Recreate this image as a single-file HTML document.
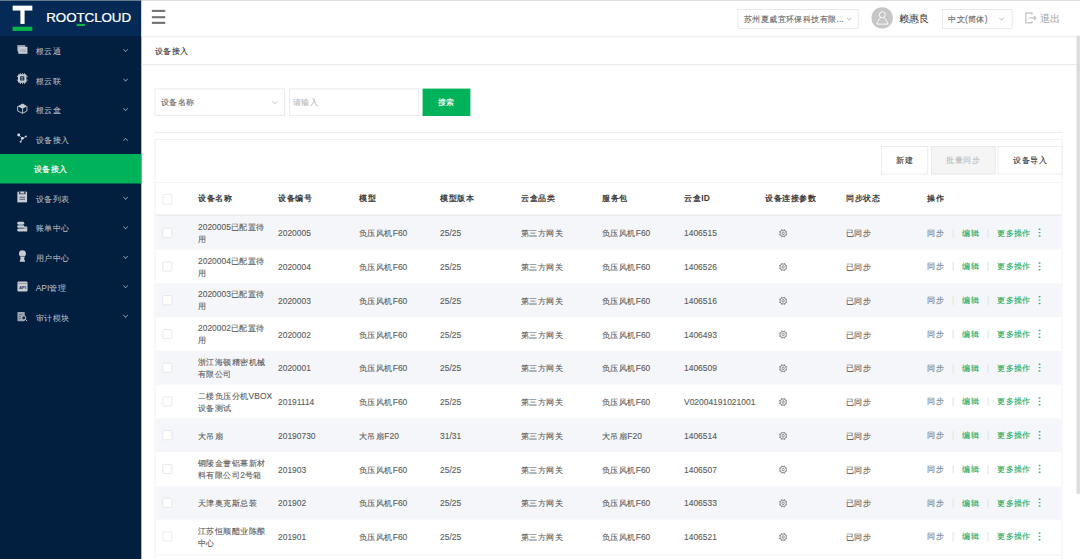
<!DOCTYPE html>
<html><head><meta charset="utf-8">
<style>
*{box-sizing:border-box;margin:0;padding:0}
html,body{width:1080px;height:559px;overflow:hidden;background:#fff}
#pg{-webkit-text-stroke-width:0.15px;position:absolute;left:0;top:0;width:1536px;height:795px;transform:scale(0.703125);transform-origin:0 0;font-family:"Liberation Sans",sans-serif;color:#555;background:#fff;overflow:hidden}
.a{position:absolute}
.mi{position:absolute;left:0;width:200.6px;height:42.1px;font-size:12px;color:#b3bac4;line-height:42.1px;-webkit-text-stroke-width:0.1px}
.mi .t{position:absolute;left:50.8px;top:1px}
.mi svg{position:absolute;left:22.6px;top:10px;width:18px;height:18px}
.mi .ch{position:absolute;left:175.5px;top:16.8px;width:5.2px;height:5.2px;border-right:1.3px solid #95a2b4;border-bottom:1.3px solid #95a2b4;transform:rotate(45deg)}
.mi .ch.up{transform:rotate(-135deg);top:19.5px}
.mi.act{background:#00b259;color:#fff;-webkit-text-stroke-width:0.3px}
.mi.act .t{left:48.4px}
.inp{position:absolute;border:1px solid #e2e2e2;background:#fff;font-size:12px;line-height:37px}
.btn{position:absolute;border:1px solid #e4e4e4;background:#fff;font-size:12px;color:#333;text-align:center;line-height:39px}
.th{position:absolute;font-size:12px;color:#3c3c3c;font-weight:bold;line-height:14px;-webkit-text-stroke-width:0}
.row{position:absolute;left:220.5px;width:1288.5px;height:48px}
.row.g{background:#f4f6f9}
.c{position:absolute;font-size:12px;color:#5c5c5c;height:48px;display:flex;align-items:center;line-height:17.3px;padding-top:3px;white-space:nowrap}
.cb{position:absolute;left:230.6px;width:14.5px;height:14.5px;border:1px solid #dfdfdf;background:#fff;border-radius:2px}
.gear{position:absolute;left:1106.8px;width:13.6px;height:13.6px}
.ops{position:absolute;left:1318.6px;font-size:12px;height:48px;line-height:48px;padding-top:0.5px;white-space:nowrap}
.dots{position:absolute;left:1477.3px;width:2.3px;height:2.3px;background:#3cb371;border-radius:1.2px;box-shadow:0 4.8px 0 #3cb371,0 9.6px 0 #3cb371}
.ops .s{color:#7a7a7a}
.ops .e{color:#17a95b}
.ops .sep{color:#e2e2e2;display:inline-block;width:25px;text-align:center;margin:0 0.4px}
</style></head><body>
<div id="pg">
<div class="a" style="left:0;top:0;width:1536px;height:1.4px;background:#c2c2c2"></div>
<div class="a" style="left:0;top:1.4px;width:200.6px;height:794px;background:#021f3f"></div>
<div class="a" style="left:0;top:1.4px;width:200.6px;height:49.8px;background:#052a55"></div>
<div class="a" style="left:18.06px;top:8.25px;width:28.44px;height:6.54px;background:#fff"></div>
<div class="a" style="left:29.01px;top:14.22px;width:6.4px;height:19.91px;background:#fff"></div>
<div class="a" style="left:18.06px;top:38.12px;width:28.44px;height:5.83px;background:#0bb34a"></div>
<div class="a" style="left:65.85px;top:13.65px;font-size:19px;color:#fff;letter-spacing:-0.1px;line-height:22px;-webkit-text-stroke-width:0.35px">ROOTCLOUD</div>
<div class="a" style="left:108.52px;top:34.13px;width:12.37px;height:2.84px;background:#0bb34a"></div>
<div class="mi" style="top:51.3px"><svg viewBox="0 0 18 18"><rect x="1.5" y="3" width="11.5" height="9" fill="#8e98a6"/><rect x="3" y="5.5" width="13" height="10" fill="#c8cdd4"/><text x="9.5" y="12.8" font-size="5" text-anchor="middle" fill="#8a8f98" font-family="Liberation Sans">SIM</text></svg><span class="t">根云通</span><span class="ch"></span></div>
<div class="mi" style="top:93.3px"><svg viewBox="0 0 18 18"><rect x="2.6" y="2.6" width="12" height="12" rx="1.5" fill="#c8cdd4"/><g stroke="#c8cdd4" stroke-width="1.2"><path d="M6 1v2M9 1v2M12 1v2M6 14.5v2M9 14.5v2M12 14.5v2M1 6h2M1 11h2M14.5 6h2M14.5 11h2"/></g><rect x="5.6" y="5.6" width="6" height="6" rx="0.8" fill="#1d2f4a"/><path d="M7 7.5h3M7 9.6h3" stroke="#c8cdd4" stroke-width="0.9"/></svg><span class="t">根云联</span><span class="ch"></span></div>
<div class="mi" style="top:135.3px"><svg viewBox="0 0 18 18"><path d="M9.2 2.2L15.4 6.1L9.1 9.5L2 6.1Z" fill="#c8cdd4"/><path d="M2.1 6.1V12.8L9.2 16.2L15.3 12.8V6.1M9.1 9.4V16.2" fill="none" stroke="#c8cdd4" stroke-width="1.3" stroke-linejoin="round"/></svg><span class="t">根云盒</span><span class="ch"></span></div>
<div class="mi" style="top:177.4px"><svg viewBox="0 0 18 18"><path d="M3.6 5L8.8 9.7L13.8 7.1M8.8 9.7L6.3 14.7" stroke="#c8cdd4" stroke-width="1.1" fill="none"/><circle cx="3.6" cy="5.1" r="2.1" fill="#d8dce2"/><circle cx="8.8" cy="9.7" r="1.9" fill="#d8dce2"/><circle cx="13.8" cy="7.1" r="1.4" fill="#c8cdd4"/><circle cx="6.3" cy="14.7" r="1.4" fill="#c8cdd4"/></svg><span class="t">设备接入</span><span class="ch up"></span></div>
<div class="mi act" style="top:219.4px"><span class="t">设备接入</span></div>
<div class="mi" style="top:261.4px"><svg viewBox="0 0 18 18"><rect x="1.7" y="1.6" width="13.8" height="15.2" fill="#c8cdd4"/><path d="M3.9 1.6H13.5V4.6Q13.5 5.4 12.7 5.4H4.7Q3.9 5.4 3.9 4.6Z" fill="#34445c"/><rect x="5.9" y="1.6" width="5.4" height="2.5" fill="#c8cdd4"/><rect x="4.7" y="8.8" width="8.1" height="1.3" fill="#4a596e"/><rect x="4.7" y="11.7" width="8.1" height="1.3" fill="#4a596e"/></svg><span class="t">设备列表</span><span class="ch"></span></div>
<div class="mi" style="top:303.4px"><svg viewBox="0 0 18 18"><g fill="#c8cdd4"><rect x="1.6" y="2.5" width="9.8" height="4" rx="2"/><rect x="1.6" y="7.4" width="9.8" height="3.5" rx="0.9"/><rect x="1.6" y="11.9" width="9.8" height="4.4" rx="2"/><rect x="10.6" y="9.3" width="5.2" height="7" rx="0.6"/></g><path d="M10.6 11.4h5.2" stroke="#56637a" stroke-width="0.7"/></svg><span class="t">账单中心</span><span class="ch"></span></div>
<div class="mi" style="top:345.4px"><svg viewBox="0 0 18 18"><circle cx="8.9" cy="5.7" r="4.9" fill="#c8cdd4"/><path d="M5.4 10H12.4L11.2 12.6L12.8 17.2H4.8L6.4 12.6Z" fill="#c8cdd4"/><path d="M6 9.6h5.8" stroke="#3a4a60" stroke-width="0.9"/></svg><span class="t">用户中心</span><span class="ch"></span></div>
<div class="mi" style="top:387.5px"><svg viewBox="0 0 18 18"><rect x="1.8" y="2.2" width="14.4" height="14.5" rx="1.8" fill="#c8cdd4"/><path d="M2 5.2h14" stroke="#6f7b8c" stroke-width="0.8"/><text x="9" y="13.6" font-size="6.2" font-weight="bold" text-anchor="middle" fill="#2a3c58" font-family="Liberation Sans">API</text></svg><span class="t">API管理</span><span class="ch"></span></div>
<div class="mi" style="top:429.5px"><svg viewBox="0 0 18 18"><rect x="1.8" y="3.6" width="10.4" height="13.2" rx="1" fill="#9aa3b0"/><path d="M4 7.5h5M4 10.3h3M4 13h3" stroke="#56637a" stroke-width="0.9"/><circle cx="10.8" cy="12.1" r="3" fill="#1d2f4a" stroke="#c8cdd4" stroke-width="1.3"/><path d="M12.9 14.2L15.6 16.6" stroke="#c8cdd4" stroke-width="1.4"/></svg><span class="t">审计模块</span><span class="ch"></span></div>
<div class="a" style="left:200.6px;top:1.4px;width:1335.4px;height:50.6px;background:#fff;border-bottom:1.2px solid #e6e6e6;box-shadow:0 1px 4px rgba(0,0,0,.08)"></div>
<div class="a" style="left:216px;top:14.299999999999999px;width:19px;height:2.7px;background:#727272"></div>
<div class="a" style="left:216px;top:23.099999999999998px;width:19px;height:2.7px;background:#727272"></div>
<div class="a" style="left:216px;top:31.3px;width:19px;height:2.7px;background:#727272"></div>
<div class="a" style="left:1048.8px;top:12.9px;width:172px;height:27.8px;border:1px solid #e0e0e0;font-size:12px;color:#666;line-height:26px;padding-left:8px;white-space:nowrap">苏州夏威宜环保科技有限...</div>
<div class="a" style="left:1205px;top:22.5px;width:5px;height:5px;border-right:1px solid #bbb;border-bottom:1px solid #bbb;transform:rotate(45deg)"></div>
<svg class="a" style="left:1239px;top:10px" width="31" height="31" viewBox="0 0 31 31"><circle cx="15.6" cy="15.5" r="15.3" fill="#c6c6c6"/><circle cx="15.9" cy="11" r="4.3" fill="none" stroke="#fff" stroke-width="1.3"/><path d="M13.4 14.6L8.2 22.5V24.3H23.6V22.5L18.4 14.6" fill="none" stroke="#fff" stroke-width="1.3" stroke-linejoin="round"/></svg>
<div class="a" style="left:1279px;top:17.5px;font-size:14px;color:#333;line-height:17px;-webkit-text-stroke-width:0">赖惠良</div>
<div class="a" style="left:1340px;top:13.2px;width:100px;height:27.6px;border:1px solid #e0e0e0;font-size:12px;color:#666;line-height:26px;padding-left:7.5px;white-space:nowrap">中文(简体)</div>
<div class="a" style="left:1422px;top:22.5px;width:5px;height:5px;border-right:1px solid #bbb;border-bottom:1px solid #bbb;transform:rotate(45deg)"></div>
<svg class="a" style="left:1455px;top:15px" width="22" height="22" viewBox="0 0 22 22"><path d="M12.7 6V3.5H3.9V17.4H12.7V15" fill="none" stroke="#c8c8c8" stroke-width="2" stroke-linejoin="round"/><path d="M8.2 10.5H18.2M15.4 7.7L18.2 10.5L15.4 13.4" fill="none" stroke="#c8c8c8" stroke-width="1.9"/></svg>
<div class="a" style="left:1479.5px;top:18px;font-size:14px;color:#aaa;line-height:17px">退出</div>
<div class="a" style="left:200.6px;top:90.9px;width:1330px;height:1.5px;background:#e0e0e0"></div>
<div class="a" style="left:220.2px;top:66.1px;font-size:12px;color:#333;line-height:15px">设备接入</div>
<div class="inp" style="left:219.9px;top:125.6px;width:185px;height:39px;padding-left:7.6px;padding-top:0.7px;color:#666">设备名称</div>
<div class="a" style="left:387.6px;top:140.7px;width:5.5px;height:5.5px;border-right:1px solid #c4c4c4;border-bottom:1px solid #c4c4c4;transform:rotate(45deg)"></div>
<div class="inp" style="left:411.2px;top:125.6px;width:185px;height:39px;padding-left:4.1px;padding-top:0.7px;color:#bbb">请输入</div>
<div class="a" style="left:600.5px;top:125.6px;width:68.7px;height:39px;background:#00b259;color:#fff;font-size:12px;text-align:center;line-height:39px">搜索</div>
<div class="a" style="left:220.3px;top:187.6px;width:1291px;height:1.5px;background:#e4e4e4"></div>
<div class="a" style="left:219.5px;top:198.1px;width:1291.6px;height:620px;border:1.5px solid #ececec"></div>
<div class="btn" style="left:1252.6px;top:208.1px;width:67.8px;height:40.1px">新建</div>
<div class="btn" style="left:1324px;top:208.1px;width:91.9px;height:40.1px;background:#f5f5f5;color:#bdbdbd">批量同步</div>
<div class="btn" style="left:1419.4px;top:208.1px;width:91.9px;height:40.1px">设备导入</div>
<div class="a" style="left:220.5px;top:258.6px;width:1288.5px;height:1.4px;background:#eeeeee"></div>
<div class="a" style="left:220.5px;top:304.6px;width:1288.5px;height:2.4px;background:#e8e9eb"></div>
<div class="cb" style="top:276px"></div>
<div class="th" style="left:282.3px;top:275.3px">设备名称</div>
<div class="th" style="left:396.08px;top:275.3px">设备编号</div>
<div class="th" style="left:511.28px;top:275.3px">模型</div>
<div class="th" style="left:626.48px;top:275.3px">模型版本</div>
<div class="th" style="left:741.6800000000001px;top:275.3px">云盒品类</div>
<div class="th" style="left:856.88px;top:275.3px">服务包</div>
<div class="th" style="left:973.5px;top:275.3px">云盒ID</div>
<div class="th" style="left:1088.7px;top:275.3px">设备连接参数</div>
<div class="th" style="left:1203.9px;top:275.3px">同步状态</div>
<div class="th" style="left:1319.1000000000001px;top:275.3px">操作</div>
<div class="row g" style="top:306.8px"></div>
<div class="cb" style="top:323.6px"></div>
<div class="c" style="left:281.6px;top:306.8px;width:104px">2020005已配置待<br>用</div>
<div class="c" style="left:395.38px;top:306.8px;width:112px">2020005</div>
<div class="c" style="left:510.58px;top:306.8px;width:112px">负压风机F60</div>
<div class="c" style="left:625.78px;top:306.8px;width:112px">25/25</div>
<div class="c" style="left:740.98px;top:306.8px;width:112px">第三方网关</div>
<div class="c" style="left:856.18px;top:306.8px;width:112px">负压风机F60</div>
<div class="c" style="left:972.8px;top:306.8px;width:112px">1406515</div>
<svg class="gear" style="top:325.3px" viewBox="0 0 15 15"><g fill="#7c7c7c"><circle cx="12.95" cy="9.76" r="0.85"/><circle cx="9.76" cy="12.95" r="0.85"/><circle cx="5.24" cy="12.95" r="0.85"/><circle cx="2.05" cy="9.76" r="0.85"/><circle cx="2.05" cy="5.24" r="0.85"/><circle cx="5.24" cy="2.05" r="0.85"/><circle cx="9.76" cy="2.05" r="0.85"/><circle cx="12.95" cy="5.24" r="0.85"/></g><circle cx="7.5" cy="7.5" r="5.0" fill="none" stroke="#7c7c7c" stroke-width="1.4"/><ellipse cx="7.5" cy="7.5" rx="1.7" ry="2.2" fill="none" stroke="#666" stroke-width="1.1"/></svg>
<div class="c" style="left:1203.2px;top:306.8px">已同步</div>
<div class="ops" style="top:306.8px"><span class="s">同步</span><span class="sep">|</span><span class="e">编辑</span><span class="sep">|</span><span class="e">更多操作</span></div>
<div class="dots" style="top:325.1px"></div>
<div class="row" style="top:354.8px"></div>
<div class="cb" style="top:371.6px"></div>
<div class="c" style="left:281.6px;top:354.8px;width:104px">2020004已配置待<br>用</div>
<div class="c" style="left:395.38px;top:354.8px;width:112px">2020004</div>
<div class="c" style="left:510.58px;top:354.8px;width:112px">负压风机F60</div>
<div class="c" style="left:625.78px;top:354.8px;width:112px">25/25</div>
<div class="c" style="left:740.98px;top:354.8px;width:112px">第三方网关</div>
<div class="c" style="left:856.18px;top:354.8px;width:112px">负压风机F60</div>
<div class="c" style="left:972.8px;top:354.8px;width:112px">1406526</div>
<svg class="gear" style="top:373.3px" viewBox="0 0 15 15"><g fill="#7c7c7c"><circle cx="12.95" cy="9.76" r="0.85"/><circle cx="9.76" cy="12.95" r="0.85"/><circle cx="5.24" cy="12.95" r="0.85"/><circle cx="2.05" cy="9.76" r="0.85"/><circle cx="2.05" cy="5.24" r="0.85"/><circle cx="5.24" cy="2.05" r="0.85"/><circle cx="9.76" cy="2.05" r="0.85"/><circle cx="12.95" cy="5.24" r="0.85"/></g><circle cx="7.5" cy="7.5" r="5.0" fill="none" stroke="#7c7c7c" stroke-width="1.4"/><ellipse cx="7.5" cy="7.5" rx="1.7" ry="2.2" fill="none" stroke="#666" stroke-width="1.1"/></svg>
<div class="c" style="left:1203.2px;top:354.8px">已同步</div>
<div class="ops" style="top:354.8px"><span class="s">同步</span><span class="sep">|</span><span class="e">编辑</span><span class="sep">|</span><span class="e">更多操作</span></div>
<div class="dots" style="top:373.1px"></div>
<div class="row g" style="top:402.8px"></div>
<div class="cb" style="top:419.6px"></div>
<div class="c" style="left:281.6px;top:402.8px;width:104px">2020003已配置待<br>用</div>
<div class="c" style="left:395.38px;top:402.8px;width:112px">2020003</div>
<div class="c" style="left:510.58px;top:402.8px;width:112px">负压风机F60</div>
<div class="c" style="left:625.78px;top:402.8px;width:112px">25/25</div>
<div class="c" style="left:740.98px;top:402.8px;width:112px">第三方网关</div>
<div class="c" style="left:856.18px;top:402.8px;width:112px">负压风机F60</div>
<div class="c" style="left:972.8px;top:402.8px;width:112px">1406516</div>
<svg class="gear" style="top:421.3px" viewBox="0 0 15 15"><g fill="#7c7c7c"><circle cx="12.95" cy="9.76" r="0.85"/><circle cx="9.76" cy="12.95" r="0.85"/><circle cx="5.24" cy="12.95" r="0.85"/><circle cx="2.05" cy="9.76" r="0.85"/><circle cx="2.05" cy="5.24" r="0.85"/><circle cx="5.24" cy="2.05" r="0.85"/><circle cx="9.76" cy="2.05" r="0.85"/><circle cx="12.95" cy="5.24" r="0.85"/></g><circle cx="7.5" cy="7.5" r="5.0" fill="none" stroke="#7c7c7c" stroke-width="1.4"/><ellipse cx="7.5" cy="7.5" rx="1.7" ry="2.2" fill="none" stroke="#666" stroke-width="1.1"/></svg>
<div class="c" style="left:1203.2px;top:402.8px">已同步</div>
<div class="ops" style="top:402.8px"><span class="s">同步</span><span class="sep">|</span><span class="e">编辑</span><span class="sep">|</span><span class="e">更多操作</span></div>
<div class="dots" style="top:421.1px"></div>
<div class="row" style="top:450.8px"></div>
<div class="cb" style="top:467.6px"></div>
<div class="c" style="left:281.6px;top:450.8px;width:104px">2020002已配置待<br>用</div>
<div class="c" style="left:395.38px;top:450.8px;width:112px">2020002</div>
<div class="c" style="left:510.58px;top:450.8px;width:112px">负压风机F60</div>
<div class="c" style="left:625.78px;top:450.8px;width:112px">25/25</div>
<div class="c" style="left:740.98px;top:450.8px;width:112px">第三方网关</div>
<div class="c" style="left:856.18px;top:450.8px;width:112px">负压风机F60</div>
<div class="c" style="left:972.8px;top:450.8px;width:112px">1406493</div>
<svg class="gear" style="top:469.3px" viewBox="0 0 15 15"><g fill="#7c7c7c"><circle cx="12.95" cy="9.76" r="0.85"/><circle cx="9.76" cy="12.95" r="0.85"/><circle cx="5.24" cy="12.95" r="0.85"/><circle cx="2.05" cy="9.76" r="0.85"/><circle cx="2.05" cy="5.24" r="0.85"/><circle cx="5.24" cy="2.05" r="0.85"/><circle cx="9.76" cy="2.05" r="0.85"/><circle cx="12.95" cy="5.24" r="0.85"/></g><circle cx="7.5" cy="7.5" r="5.0" fill="none" stroke="#7c7c7c" stroke-width="1.4"/><ellipse cx="7.5" cy="7.5" rx="1.7" ry="2.2" fill="none" stroke="#666" stroke-width="1.1"/></svg>
<div class="c" style="left:1203.2px;top:450.8px">已同步</div>
<div class="ops" style="top:450.8px"><span class="s">同步</span><span class="sep">|</span><span class="e">编辑</span><span class="sep">|</span><span class="e">更多操作</span></div>
<div class="dots" style="top:469.1px"></div>
<div class="row g" style="top:498.8px"></div>
<div class="cb" style="top:515.6px"></div>
<div class="c" style="left:281.6px;top:498.8px;width:104px">浙江海顿精密机械<br>有限公司</div>
<div class="c" style="left:395.38px;top:498.8px;width:112px">2020001</div>
<div class="c" style="left:510.58px;top:498.8px;width:112px">负压风机F60</div>
<div class="c" style="left:625.78px;top:498.8px;width:112px">25/25</div>
<div class="c" style="left:740.98px;top:498.8px;width:112px">第三方网关</div>
<div class="c" style="left:856.18px;top:498.8px;width:112px">负压风机F60</div>
<div class="c" style="left:972.8px;top:498.8px;width:112px">1406509</div>
<svg class="gear" style="top:517.3px" viewBox="0 0 15 15"><g fill="#7c7c7c"><circle cx="12.95" cy="9.76" r="0.85"/><circle cx="9.76" cy="12.95" r="0.85"/><circle cx="5.24" cy="12.95" r="0.85"/><circle cx="2.05" cy="9.76" r="0.85"/><circle cx="2.05" cy="5.24" r="0.85"/><circle cx="5.24" cy="2.05" r="0.85"/><circle cx="9.76" cy="2.05" r="0.85"/><circle cx="12.95" cy="5.24" r="0.85"/></g><circle cx="7.5" cy="7.5" r="5.0" fill="none" stroke="#7c7c7c" stroke-width="1.4"/><ellipse cx="7.5" cy="7.5" rx="1.7" ry="2.2" fill="none" stroke="#666" stroke-width="1.1"/></svg>
<div class="c" style="left:1203.2px;top:498.8px">已同步</div>
<div class="ops" style="top:498.8px"><span class="s">同步</span><span class="sep">|</span><span class="e">编辑</span><span class="sep">|</span><span class="e">更多操作</span></div>
<div class="dots" style="top:517.1px"></div>
<div class="row" style="top:546.8px"></div>
<div class="cb" style="top:563.6px"></div>
<div class="c" style="left:281.6px;top:546.8px;width:104px">二楼负压分机VBOX<br>设备测试</div>
<div class="c" style="left:395.38px;top:546.8px;width:112px">20191114</div>
<div class="c" style="left:510.58px;top:546.8px;width:112px">负压风机F60</div>
<div class="c" style="left:625.78px;top:546.8px;width:112px">25/25</div>
<div class="c" style="left:740.98px;top:546.8px;width:112px">第三方网关</div>
<div class="c" style="left:856.18px;top:546.8px;width:112px">负压风机F60</div>
<div class="c" style="left:972.8px;top:546.8px;width:112px">V02004191021001</div>
<svg class="gear" style="top:565.3px" viewBox="0 0 15 15"><g fill="#7c7c7c"><circle cx="12.95" cy="9.76" r="0.85"/><circle cx="9.76" cy="12.95" r="0.85"/><circle cx="5.24" cy="12.95" r="0.85"/><circle cx="2.05" cy="9.76" r="0.85"/><circle cx="2.05" cy="5.24" r="0.85"/><circle cx="5.24" cy="2.05" r="0.85"/><circle cx="9.76" cy="2.05" r="0.85"/><circle cx="12.95" cy="5.24" r="0.85"/></g><circle cx="7.5" cy="7.5" r="5.0" fill="none" stroke="#7c7c7c" stroke-width="1.4"/><ellipse cx="7.5" cy="7.5" rx="1.7" ry="2.2" fill="none" stroke="#666" stroke-width="1.1"/></svg>
<div class="c" style="left:1203.2px;top:546.8px">已同步</div>
<div class="ops" style="top:546.8px"><span class="s">同步</span><span class="sep">|</span><span class="e">编辑</span><span class="sep">|</span><span class="e">更多操作</span></div>
<div class="dots" style="top:565.1px"></div>
<div class="row g" style="top:594.8px"></div>
<div class="cb" style="top:611.6px"></div>
<div class="c" style="left:281.6px;top:594.8px;width:104px">大吊扇</div>
<div class="c" style="left:395.38px;top:594.8px;width:112px">20190730</div>
<div class="c" style="left:510.58px;top:594.8px;width:112px">大吊扇F20</div>
<div class="c" style="left:625.78px;top:594.8px;width:112px">31/31</div>
<div class="c" style="left:740.98px;top:594.8px;width:112px">第三方网关</div>
<div class="c" style="left:856.18px;top:594.8px;width:112px">大吊扇F20</div>
<div class="c" style="left:972.8px;top:594.8px;width:112px">1406514</div>
<svg class="gear" style="top:613.3px" viewBox="0 0 15 15"><g fill="#7c7c7c"><circle cx="12.95" cy="9.76" r="0.85"/><circle cx="9.76" cy="12.95" r="0.85"/><circle cx="5.24" cy="12.95" r="0.85"/><circle cx="2.05" cy="9.76" r="0.85"/><circle cx="2.05" cy="5.24" r="0.85"/><circle cx="5.24" cy="2.05" r="0.85"/><circle cx="9.76" cy="2.05" r="0.85"/><circle cx="12.95" cy="5.24" r="0.85"/></g><circle cx="7.5" cy="7.5" r="5.0" fill="none" stroke="#7c7c7c" stroke-width="1.4"/><ellipse cx="7.5" cy="7.5" rx="1.7" ry="2.2" fill="none" stroke="#666" stroke-width="1.1"/></svg>
<div class="c" style="left:1203.2px;top:594.8px">已同步</div>
<div class="ops" style="top:594.8px"><span class="s">同步</span><span class="sep">|</span><span class="e">编辑</span><span class="sep">|</span><span class="e">更多操作</span></div>
<div class="dots" style="top:613.1px"></div>
<div class="row" style="top:642.8px"></div>
<div class="cb" style="top:659.6px"></div>
<div class="c" style="left:281.6px;top:642.8px;width:104px">铜陵金誉铝幕新材<br>料有限公司2号箱</div>
<div class="c" style="left:395.38px;top:642.8px;width:112px">201903</div>
<div class="c" style="left:510.58px;top:642.8px;width:112px">负压风机F60</div>
<div class="c" style="left:625.78px;top:642.8px;width:112px">25/25</div>
<div class="c" style="left:740.98px;top:642.8px;width:112px">第三方网关</div>
<div class="c" style="left:856.18px;top:642.8px;width:112px">负压风机F60</div>
<div class="c" style="left:972.8px;top:642.8px;width:112px">1406507</div>
<svg class="gear" style="top:661.3px" viewBox="0 0 15 15"><g fill="#7c7c7c"><circle cx="12.95" cy="9.76" r="0.85"/><circle cx="9.76" cy="12.95" r="0.85"/><circle cx="5.24" cy="12.95" r="0.85"/><circle cx="2.05" cy="9.76" r="0.85"/><circle cx="2.05" cy="5.24" r="0.85"/><circle cx="5.24" cy="2.05" r="0.85"/><circle cx="9.76" cy="2.05" r="0.85"/><circle cx="12.95" cy="5.24" r="0.85"/></g><circle cx="7.5" cy="7.5" r="5.0" fill="none" stroke="#7c7c7c" stroke-width="1.4"/><ellipse cx="7.5" cy="7.5" rx="1.7" ry="2.2" fill="none" stroke="#666" stroke-width="1.1"/></svg>
<div class="c" style="left:1203.2px;top:642.8px">已同步</div>
<div class="ops" style="top:642.8px"><span class="s">同步</span><span class="sep">|</span><span class="e">编辑</span><span class="sep">|</span><span class="e">更多操作</span></div>
<div class="dots" style="top:661.1px"></div>
<div class="row g" style="top:690.8px"></div>
<div class="cb" style="top:707.6px"></div>
<div class="c" style="left:281.6px;top:690.8px;width:104px">天津奥克斯总装</div>
<div class="c" style="left:395.38px;top:690.8px;width:112px">201902</div>
<div class="c" style="left:510.58px;top:690.8px;width:112px">负压风机F60</div>
<div class="c" style="left:625.78px;top:690.8px;width:112px">25/25</div>
<div class="c" style="left:740.98px;top:690.8px;width:112px">第三方网关</div>
<div class="c" style="left:856.18px;top:690.8px;width:112px">负压风机F60</div>
<div class="c" style="left:972.8px;top:690.8px;width:112px">1406533</div>
<svg class="gear" style="top:709.3px" viewBox="0 0 15 15"><g fill="#7c7c7c"><circle cx="12.95" cy="9.76" r="0.85"/><circle cx="9.76" cy="12.95" r="0.85"/><circle cx="5.24" cy="12.95" r="0.85"/><circle cx="2.05" cy="9.76" r="0.85"/><circle cx="2.05" cy="5.24" r="0.85"/><circle cx="5.24" cy="2.05" r="0.85"/><circle cx="9.76" cy="2.05" r="0.85"/><circle cx="12.95" cy="5.24" r="0.85"/></g><circle cx="7.5" cy="7.5" r="5.0" fill="none" stroke="#7c7c7c" stroke-width="1.4"/><ellipse cx="7.5" cy="7.5" rx="1.7" ry="2.2" fill="none" stroke="#666" stroke-width="1.1"/></svg>
<div class="c" style="left:1203.2px;top:690.8px">已同步</div>
<div class="ops" style="top:690.8px"><span class="s">同步</span><span class="sep">|</span><span class="e">编辑</span><span class="sep">|</span><span class="e">更多操作</span></div>
<div class="dots" style="top:709.1px"></div>
<div class="row" style="top:738.8px"></div>
<div class="cb" style="top:755.6px"></div>
<div class="c" style="left:281.6px;top:738.8px;width:104px">江苏恒顺醋业陈酿<br>中心</div>
<div class="c" style="left:395.38px;top:738.8px;width:112px">201901</div>
<div class="c" style="left:510.58px;top:738.8px;width:112px">负压风机F60</div>
<div class="c" style="left:625.78px;top:738.8px;width:112px">25/25</div>
<div class="c" style="left:740.98px;top:738.8px;width:112px">第三方网关</div>
<div class="c" style="left:856.18px;top:738.8px;width:112px">负压风机F60</div>
<div class="c" style="left:972.8px;top:738.8px;width:112px">1406521</div>
<svg class="gear" style="top:757.3px" viewBox="0 0 15 15"><g fill="#7c7c7c"><circle cx="12.95" cy="9.76" r="0.85"/><circle cx="9.76" cy="12.95" r="0.85"/><circle cx="5.24" cy="12.95" r="0.85"/><circle cx="2.05" cy="9.76" r="0.85"/><circle cx="2.05" cy="5.24" r="0.85"/><circle cx="5.24" cy="2.05" r="0.85"/><circle cx="9.76" cy="2.05" r="0.85"/><circle cx="12.95" cy="5.24" r="0.85"/></g><circle cx="7.5" cy="7.5" r="5.0" fill="none" stroke="#7c7c7c" stroke-width="1.4"/><ellipse cx="7.5" cy="7.5" rx="1.7" ry="2.2" fill="none" stroke="#666" stroke-width="1.1"/></svg>
<div class="c" style="left:1203.2px;top:738.8px">已同步</div>
<div class="ops" style="top:738.8px"><span class="s">同步</span><span class="sep">|</span><span class="e">编辑</span><span class="sep">|</span><span class="e">更多操作</span></div>
<div class="dots" style="top:757.1px"></div>
<div class="a" style="left:220.5px;top:788.6px;width:1288.5px;height:1.5px;background:#efefef"></div>
<div class="a" style="left:1531px;top:51.2px;width:5px;height:651.4px;background:#dcdcdc;border-radius:0 0 3px 3px"></div>
</div>
</body></html>
